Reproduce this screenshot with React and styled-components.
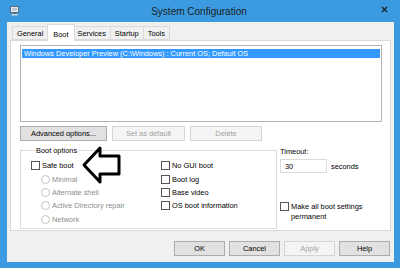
import React from "react";
import styled, { createGlobalStyle } from "styled-components";

const GlobalStyle = createGlobalStyle`
  html, body {
    margin: 0;
    padding: 0;
    width: 400px;
    height: 268px;
    overflow: hidden;
  }
  body {
    font-family: "Liberation Sans", Arial, sans-serif;
    font-size: 7.4px;
    color: #000;
  }
`;

const Window = styled.div`
  position: relative;
  width: 400px;
  height: 268px;
  background: #3c9be0;
  display: flex;
  flex-direction: column;
  box-sizing: border-box;
`;

const TitleBar = styled.div`
  height: 22px;
  display: grid;
  grid-template-columns: 1fr auto 1fr;
  align-items: center;
  padding: 0 12px 0 10px;
  flex-shrink: 0;
`;

const Title = styled.div`
  font-size: 10px;
  color: #1b1b1b;
  text-align: center;
  padding-top: 1px;
`;

const TitleIcon = styled.div`
  display: flex;
  align-items: center;
`;

const CloseBox = styled.div`
  display: flex;
  justify-content: flex-end;
  align-items: center;
  padding-bottom: 3px;
`;

const Body = styled.div`
  flex: 1;
  margin: 0 6px 6px 7px;
  background: #f0f0f0;
  display: flex;
  flex-direction: column;
  padding: 3px 3px 0 3px;
`;

const TabStrip = styled.div`
  display: flex;
  align-items: flex-end;
  height: 16px;
  padding-left: 2px;
  position: relative;
  z-index: 1;
  margin-bottom: -1px;
`;

const Tab = styled.div`
  box-sizing: border-box;
  height: ${(p) => (p.$active ? "17px" : "14px")};
  padding: ${(p) => (p.$active ? "2px 5px 0" : "1px 4px 0")};
  margin: ${(p) => (p.$active ? "0 -1px" : "0 0 1px")};
  background: ${(p) => (p.$active ? "#fff" : "#f0f0f0")};
  border: 1px solid #d9d9d9;
  border-bottom: ${(p) => (p.$active ? "none" : "1px solid #d9d9d9")};
  margin-left: ${(p) => (p.$first ? "0" : "-1px")};
  display: flex;
  align-items: center;
  position: relative;
  z-index: ${(p) => (p.$active ? 2 : 1)};
`;

const Panel = styled.div`
  height: 191px;
  box-sizing: border-box;
  background: #fff;
  border: 1px solid #d9d9d9;
  padding: 4px 8px 0 9px;
  display: flex;
  flex-direction: column;
`;

const ListBox = styled.div`
  height: 77px;
  box-sizing: border-box;
  border: 1px solid #b4b4b4;
  padding: 3px 1px 0 1px;
  background: #fff;
`;

const ListItem = styled.div`
  height: 9px;
  line-height: 9px;
  background: #3399ff;
  color: #fff;
  padding-left: 2px;
  white-space: nowrap;
`;

const ButtonRow = styled.div`
  display: flex;
  gap: 5px;
  margin-top: 4px;
`;

const Button = styled.div`
  box-sizing: border-box;
  width: ${(p) => p.$w}px;
  height: 15px;
  display: flex;
  align-items: center;
  justify-content: center;
  border: 1px solid ${(p) => (p.$disabled ? "#d5d5d5" : "#adadad")};
  background: ${(p) => (p.$disabled ? "#f4f4f4" : "#e1e1e1")};
  color: ${(p) => (p.$disabled ? "#a2a2a2" : "#000")};
`;

const BootArea = styled.div`
  display: flex;
  gap: 3px;
  margin-top: 5px;
`;

const GroupBox = styled.fieldset`
  width: 257px;
  height: 83px;
  box-sizing: border-box;
  margin: 0;
  border: 1px solid #dcdcdc;
  padding: 4px 0 0 10px;
  display: grid;
  grid-template-columns: 130px auto;
  align-content: start;
`;

const Legend = styled.legend`
  padding: 0 2px;
  margin-left: 3px;
  font-size: 7.4px;
`;

const OptionColumn = styled.div`
  display: flex;
  flex-direction: column;
`;

const OptionRow = styled.div`
  height: 13.4px;
  display: flex;
  align-items: center;
  gap: 2px;
  padding-left: ${(p) => (p.$indent ? "10px" : "0")};
  color: ${(p) => (p.$disabled ? "#8e8e8e" : "#000")};
`;

const CheckBox = styled.span`
  width: 9px;
  height: 9px;
  box-sizing: border-box;
  border: 1px solid #555;
  background: #fff;
  flex-shrink: 0;
`;

const Radio = styled.span`
  width: 9px;
  height: 9px;
  box-sizing: border-box;
  border: 1px solid #c3c3c3;
  border-radius: 50%;
  background: #fff;
  flex-shrink: 0;
`;

const SideColumn = styled.div`
  display: flex;
  flex-direction: column;
  padding-top: 1px;
`;

const TimeoutRow = styled.div`
  display: flex;
  align-items: center;
  gap: 4px;
  margin-top: 3px;
`;

const TextInput = styled.div`
  box-sizing: border-box;
  width: 47px;
  height: 14px;
  border: 1px solid #dcdcdc;
  padding-left: 4px;
  display: flex;
  align-items: center;
`;

const PermanentRow = styled.div`
  display: flex;
  align-items: flex-start;
  gap: 2px;
  margin-top: 29px;
  line-height: 10px;
`;

const Footer = styled.div`
  display: flex;
  justify-content: flex-end;
  gap: 4px;
  margin-top: 10px;
  padding-right: 1px;
`;

const ArrowOverlay = styled.svg`
  position: absolute;
  left: 81px;
  top: 145px;
`;

const MonitorIcon = () => (
  <svg width="9" height="10" viewBox="0 0 9 10">
    <rect x="0.5" y="0.5" width="8" height="6" fill="#e8eef3" stroke="#5a6a78" />
    <rect x="2" y="2" width="5" height="3" fill="#b9c9d6" />
    <rect x="3" y="7" width="3" height="1" fill="#5a6a78" />
    <rect x="1.5" y="8" width="6" height="1.5" fill="#cfd6dc" />
  </svg>
);

const CloseIcon = () => (
  <svg width="7" height="7" viewBox="0 0 7 7">
    <path d="M1 1 L6 6 M6 1 L1 6" stroke="#1e2a35" strokeWidth="1.5" />
  </svg>
);

const tabs = ["General", "Boot", "Services", "Startup", "Tools"];

const leftOptions = [
  { label: "Minimal" },
  { label: "Alternate shell" },
  { label: "Active Directory repair" },
  { label: "Network" },
];

const rightOptions = ["No GUI boot", "Boot log", "Base video", "OS boot information"];

const App = () => {
  return (
    <Window>
      <GlobalStyle />
      <TitleBar>
        <TitleIcon>
          <MonitorIcon />
        </TitleIcon>
        <Title>System Configuration</Title>
        <CloseBox>
          <CloseIcon />
        </CloseBox>
      </TitleBar>
      <Body>
        <TabStrip>
          {tabs.map((t, i) => (
            <Tab key={t} $active={t === "Boot"} $first={i === 0}>
              {t}
            </Tab>
          ))}
        </TabStrip>
        <Panel>
          <ListBox>
            <ListItem>Windows Developer Preview (C:\Windows) : Current OS; Default OS</ListItem>
          </ListBox>
          <ButtonRow>
            <Button $w={87}>Advanced options...</Button>
            <Button $w={73} $disabled>
              Set as default
            </Button>
            <Button $w={72} $disabled>
              Delete
            </Button>
          </ButtonRow>
          <BootArea>
            <GroupBox>
              <Legend>Boot options</Legend>
              <OptionColumn>
                <OptionRow>
                  <CheckBox />
                  Safe boot
                </OptionRow>
                {leftOptions.map((o) => (
                  <OptionRow key={o.label} $indent $disabled>
                    <Radio />
                    {o.label}
                  </OptionRow>
                ))}
              </OptionColumn>
              <OptionColumn>
                {rightOptions.map((o) => (
                  <OptionRow key={o}>
                    <CheckBox />
                    {o}
                  </OptionRow>
                ))}
              </OptionColumn>
            </GroupBox>
            <SideColumn>
              <div>Timeout:</div>
              <TimeoutRow>
                <TextInput>30</TextInput>
                seconds
              </TimeoutRow>
              <PermanentRow>
                <CheckBox />
                <div>
                  Make all boot settings
                  <br />
                  permanent
                </div>
              </PermanentRow>
            </SideColumn>
          </BootArea>
        </Panel>
        <Footer>
          <Button $w={51}>OK</Button>
          <Button $w={51}>Cancel</Button>
          <Button $w={51} $disabled>
            Apply
          </Button>
          <Button $w={51}>Help</Button>
        </Footer>
      </Body>
      <ArrowOverlay width="42" height="42" viewBox="0 0 42 42">
        <path
          d="M3 20 L19 3 L19 11 L38 11 L38 29 L19 29 L19 37 Z"
          fill="#fff"
          stroke="#000"
          strokeWidth="3"
          strokeLinejoin="round"
        />
      </ArrowOverlay>
    </Window>
  );
};

export default App;
